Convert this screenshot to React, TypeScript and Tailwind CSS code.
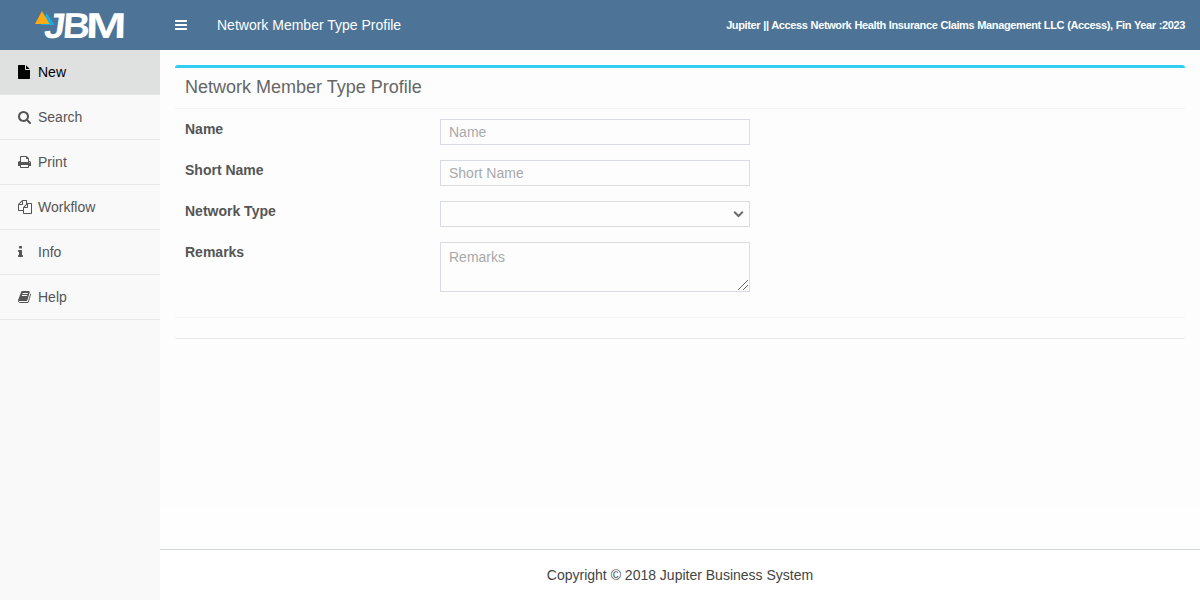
import React from "react";

type Glyph = { left: number; width: number; d: string };

const glyphs: Record<string, Glyph> = {
  bars: { left: 128, width: 1536, d: "M1664 1344v128q0 26-19 45t-45 19h-1408q-26 0-45-19t-19-45v-128q0-26 19-45t45-19h1408q26 0 45 19t19 45zm0-512v128q0 26-19 45t-45 19h-1408q-26 0-45-19t-19-45v-128q0-26 19-45t45-19h1408q26 0 45 19t19 45zm0-512v128q0 26-19 45t-45 19h-1408q-26 0-45-19t-19-45v-128q0-26 19-45t45-19h1408q26 0 45 19t19 45z" },
  file: { left: 128, width: 1536, d: "M1152 512v-472q22 14 36 28l408 408q14 14 28 36h-472zm-128 32q0 40 28 68t68 28h544v1056q0 40-28 68t-68 28h-1344q-40 0-68-28t-28-68v-1600q0-40 28-68t68-28h800v544z" },
  search: { left: 64, width: 1664, d: "M1216 832q0-185-131.5-316.5t-316.5-131.5-316.5 131.5-131.5 316.5 131.5 316.5 316.5 131.5 316.5-131.5 131.5-316.5zm512 832q0 52-38 90t-90 38q-54 0-90-38l-343-342q-179 124-399 124-143 0-273.5-55.5t-225-150-150-225-55.5-273.5 55.5-273.5 150-225 225-150 273.5-55.5 273.5 55.5 225 150 150 225 55.5 273.5q0 220-124 399l343 343q37 37 37 90z" },
  print: { left: 64, width: 1664, d: "M448 1536h896v-256h-896v256zm0-640h896v-384h-160q-40 0-68-28t-28-68v-160h-640v640zm1152 64q0-26-19-45t-45-19-45 19-19 45 19 45 45 19 45-19 19-45zm128 0v416q0 13-9.5 22.5t-22.5 9.5h-224v160q0 40-28 68t-68 28h-960q-40 0-68-28t-28-68v-160h-224q-13 0-22.5-9.5t-9.5-22.5v-416q0-79 56.5-135.5t135.5-56.5h64v-544q0-40 28-68t68-28h672q40 0 88 20t76 48l152 152q28 28 48 76t20 88v256h64q79 0 135.5 56.5t56.5 135.5z" },
  files: { left: 0, width: 1792, d: "M1696 384q40 0 68 28t28 68v1216q0 40-28 68t-68 28h-960q-40 0-68-28t-28-68v-288h-544q-40 0-68-28t-28-68v-672q0-40 20-88t48-76l408-408q28-28 76-48t88-20h416q40 0 68 28t28 68v328q68-40 128-40h416zm-544 213l-299 299h299v-299zm-640-384l-299 299h299v-299zm196 647l316-316v-416h-384v416q0 40-28 68t-68 28h-416v640h512v-256q0-40 20-88t48-76zm956 804v-1152h-384v416q0 40-28 68t-68 28h-416v640h896z" },
  info: { left: 576, width: 640, d: "M1216 1344v128q0 26-19 45t-45 19h-512q-26 0-45-19t-19-45v-128q0-26 19-45t45-19h64v-384h-64q-26 0-45-19t-19-45v-128q0-26 19-45t45-19h384q26 0 45 19t19 45v576h64q26 0 45 19t19 45zm-128-1152v192q0 26-19 45t-45 19h-256q-26 0-45-19t-19-45v-192q0-26 19-45t45-19h256q26 0 45 19t19 45z" },
  book: { left: 64, width: 1664, d: "M1703 478q40 57 18 129l-275 906q-19 64-76.5 107.5t-122.5 43.5h-923q-77 0-148.5-53.5t-99.5-131.5q-24-67-2-127 0-4 3-27t4-37q1-8-3-21.5t-3-19.5q2-11 8-21t16.5-23.5 16.5-23.5q23-38 45-91.5t30-91.5q3-10 .5-30t-.5-28q3-11 17-28t17-23q21-36 42-92t25-90q1-9-2.5-32t.5-28q4-13 22-30.5t22-22.5q19-26 42.5-84.5t27.5-96.5q1-8-3-25.5t-2-26.5q2-8 9-18t18-23 17-21q8-12 16.5-30.5t15-35 16-36 19.5-32 26.5-23.5 36-11.5 47.5 5.5l-1 3q38-9 51-9h761q74 0 114 56t18 130l-274 906q-36 119-71.5 153.5t-128.5 34.5h-869q-27 0-38 15-11 16-1 43 24 70 144 70h923q29 0 56-15.5t35-41.5l300-987q7-22 5-57 38 15 59 43zm-1064 2q-4 13 2 22.5t20 9.5h608q13 0 25.5-9.5t16.5-22.5l21-64q4-13-2-22.5t-20-9.5h-608q-13 0-25.5 9.5t-16.5 22.5zm-83 256q-4 13 2 22.5t20 9.5h608q13 0 25.5-9.5t16.5-22.5l21-64q4-13-2-22.5t-20-9.5h-608q-13 0-25.5 9.5t-16.5 22.5z" },
};

function Icon({ name }: { name: string }) {
  const g = glyphs[name];
  return (
    <svg viewBox={`${g.left} 0 ${g.width} 1792`} width={g.width / 128} height={14} fill="currentColor" aria-hidden="true">
      <path d={g.d} />
    </svg>
  );
}

function Logo() {
  return (
    <svg className="block overflow-visible" width="96" height="50" viewBox="0 0 96 50" role="img" aria-label="JBM">
      <path d="M11.5 13L19.5 25H6z" fill="#12b0ea" />
      <path d="M7 11L14.5 24H0z" fill="#fdab10" />
      <g fill="#fff" fontFamily="Liberation Sans, sans-serif" fontWeight="700" fontSize="36">
        <text transform="translate(8 38) scale(1.05 1) skewX(-8)" fontSize="35.5">J</text>
        <text transform="translate(27 38) scale(1.05 1) skewX(-4)">B</text>
        <text transform="translate(50.5 38) scale(1.36 1) skewX(-1)">M</text>
      </g>
    </svg>
  );
}

const menu = [
  { label: "New", icon: "file" },
  { label: "Search", icon: "search" },
  { label: "Print", icon: "print" },
  { label: "Workflow", icon: "files" },
  { label: "Info", icon: "info" },
  { label: "Help", icon: "book" },
];

const control =
  "block w-[310px] rounded-none border border-[#d8dae4] bg-transparent px-2 text-sm text-[#555] placeholder:text-[#a9a9a9] outline-none";

function Field({ label, children }: { label: string; children: React.ReactNode }) {
  return (
    <div className="flex items-start">
      <label className="w-[255px] text-sm font-bold text-[#555]">{label}</label>
      {children}
    </div>
  );
}

export default function App() {
  return (
    <div className="flex h-[600px] w-[1200px] flex-col overflow-hidden bg-[#fdfdfd] font-['Liberation_Sans',Arial,sans-serif] text-sm text-[#444]">
      <header className="flex h-[50px] shrink-0 items-center bg-[#4d7497] text-white">
        <div className="flex w-40 pl-[35px]">
          <Logo />
        </div>
        <button className="flex w-[57px] pl-[15px]" aria-label="Toggle menu">
          <Icon name="bars" />
        </button>
        <h1 className="text-sm">Network Member Type Profile</h1>
        <p className="ml-auto pr-[15px] pt-px text-[11px] font-bold tracking-[-0.38px] [word-spacing:0.4px]">
          Jupiter || Access Network Health Insurance Claims Management LLC (Access), Fin Year :2023
        </p>
      </header>
      <div className="flex min-h-0 grow">
        <nav className="w-40 shrink-0 bg-[#f9f9f9]">
          {menu.map((item, i) => (
            <a
              key={item.label}
              className={
                i === 0
                  ? "flex h-[45px] items-center border-b border-[#e7e7e7] bg-[#dfe1e0] pl-[18px] text-black"
                  : "flex h-[45px] items-center border-b border-[#e7e7e7] pl-[18px] text-[#555]"
              }
            >
              <span className="w-5 shrink-0">
                <Icon name={item.icon} />
              </span>
              {item.label}
            </a>
          ))}
        </nav>
        <div className="flex grow flex-col">
          <main className="grow px-[15px] pt-[15px]">
            <section className="h-[274px] rounded-[3px] border-t-[3px] border-b border-t-[#32cdf0] border-b-[#e8e8e8]">
              <h2 className="h-[41px] border-b border-[#f4f4f4] pl-[10px] pt-[9px] text-lg leading-5 text-[#666]">
                Network Member Type Profile
              </h2>
              <form className="flex h-[208px] flex-col gap-[15px] px-[10px] pt-[10px]">
                <Field label="Name">
                  <input className={`${control} h-[26px]`} placeholder="Name" />
                </Field>
                <Field label="Short Name">
                  <input className={`${control} h-[26px]`} placeholder="Short Name" />
                </Field>
                <Field label="Network Type">
                  <div className="relative">
                    <select className={`${control} h-[26px] appearance-none`} />
                    <svg className="absolute right-[6px] top-[9px]" width="11" height="8" viewBox="0 0 11 8" fill="none" stroke="#6b6b6b" strokeWidth="2" aria-hidden="true">
                      <path d="M1.2 1.8L5.5 6L9.8 1.8" />
                    </svg>
                  </div>
                </Field>
                <Field label="Remarks">
                  <div className="relative">
                    <textarea className={`${control} h-[50px] resize-none py-1`} placeholder="Remarks" />
                    <svg className="absolute bottom-[2px] right-[2px]" width="10" height="10" viewBox="0 0 10 10" fill="none" stroke="#666" aria-hidden="true">
                      <path d="M0 10L10 0M5 10L10 5" />
                    </svg>
                  </div>
                </Field>
              </form>
              <div className="border-t border-[#f4f4f4]" />
            </section>
          </main>
          <div className="h-[41px] shrink-0 bg-[#fefefe]" />
          <footer className="flex h-[51px] shrink-0 items-center justify-center border-t border-[#d2d6de] bg-white">
            Copyright © 2018 Jupiter Business System
          </footer>
        </div>
      </div>
    </div>
  );
}
